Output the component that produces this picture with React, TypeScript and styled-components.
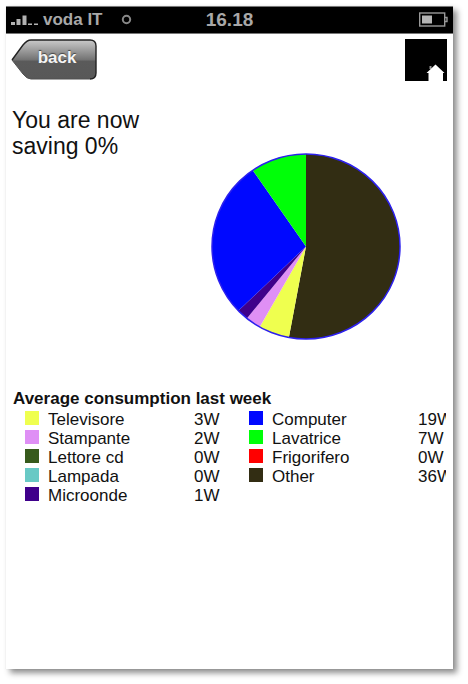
import React from "react";
import styled, { createGlobalStyle } from "styled-components";

const GlobalStyle = createGlobalStyle`
  * { box-sizing: border-box; }
  body {
    margin: 0;
    background: #fff;
    color: #111;
    font-family: "Liberation Sans", Arial, Helvetica, sans-serif;
  }
`;

const Page = styled.div`
  min-height: 100vh;
  padding: 6px 15px 15px 6px;
  display: flex;
`;

const Phone = styled.main`
  flex: 1;
  min-width: 0;
  background: #fff;
  box-shadow: 4px 4px 6px rgba(0, 0, 0, 0.45), 0 0 1px rgba(0, 0, 0, 0.1);
`;

const StatusBar = styled.header`
  display: grid;
  grid-template-columns: 1fr auto 1fr;
  align-items: center;
  height: 28px;
  padding: 0 5px;
  background: #000;
  border-top: 1px solid #777;
  border-bottom: 1px solid #777;
  color: #a8a8a8;
  font-weight: bold;
`;

const Carrier = styled.div`
  display: flex;
  align-items: center;
  font-size: 17px;
  white-space: pre;
`;

const Signal = styled.svg`
  flex: none;
  width: 27px;
  height: 12px;
  margin-right: 5px;
`;

const Activity = styled.svg`
  flex: none;
  width: 12px;
  height: 12px;
  margin-left: 18px;
`;

const Clock = styled.time`
  font-size: 19px;
`;

const Battery = styled.svg`
  width: 29px;
  height: 16px;
  justify-self: end;
`;

const Toolbar = styled.nav`
  display: flex;
  justify-content: space-between;
  align-items: flex-start;
  padding: 5px 6px 0 5px;
`;

const BackButton = styled.button`
  display: grid;
  width: 86px;
  height: 41px;
  padding: 0;
  border: 0;
  background: none;
  color: #f4f4f4;
  font: bold 17px/38px "Liberation Sans", Arial, sans-serif;
  text-shadow: 0 -1px 1px #444;
  cursor: pointer;

  & > * { grid-area: 1 / 1; }
`;

const BackLabel = styled.span`
  padding-left: 6px;
  z-index: 1;
`;

const HomeLink = styled.a`
  display: block;
  width: 42px;
  height: 42px;
`;

const Message = styled.h1`
  width: 150px;
  margin: 26px 0 0 6px;
  font-size: 23px;
  line-height: 26px;
  font-weight: normal;
`;

const ChartRow = styled.div`
  display: flex;
  justify-content: flex-end;
  padding: 0 52px 0 0;
  margin-top: -6px;
`;

const Section = styled.section`
  margin: 48px 7px 0;
`;

const Title = styled.h2`
  margin: 0;
  font-size: 17px;
  line-height: 22px;
`;

const Legend = styled.table`
  width: calc(100% - 12px);
  margin-left: 12px;
  table-layout: fixed;
  border-collapse: collapse;
  font-size: 17px;
  line-height: 19px;
`;

const Col = styled.col<{ $width?: number }>`
  width: ${(p) => (p.$width ? `${p.$width}px` : "auto")};
`;

const Cell = styled.td`
  padding: 0;
  overflow: hidden;
  white-space: nowrap;
  vertical-align: top;
`;

const Name = styled.th`
  padding: 0;
  font-weight: normal;
  text-align: left;
`;

const Swatch = styled.span<{ $color: string }>`
  display: block;
  width: 14px;
  height: 14px;
  margin-top: 1px;
  background: ${(p) => p.$color};
`;

type Item = { name: string; watts: number; color: string };

const televisore: Item = { name: "Televisore", watts: 3, color: "#efff4f" };
const stampante: Item = { name: "Stampante", watts: 2, color: "#df8ff5" };
const lettore: Item = { name: "Lettore cd", watts: 0, color: "#375a1c" };
const lampada: Item = { name: "Lampada", watts: 0, color: "#68c9c5" };
const microonde: Item = { name: "Microonde", watts: 1, color: "#3f008b" };
const computer: Item = { name: "Computer", watts: 19, color: "#0008ff" };
const lavatrice: Item = { name: "Lavatrice", watts: 7, color: "#00ff08" };
const frigorifero: Item = { name: "Frigorifero", watts: 0, color: "#ff0000" };
const other: Item = { name: "Other", watts: 36, color: "#322d13" };

const rows: Item[][] = [
  [televisore, computer],
  [stampante, lavatrice],
  [lettore, frigorifero],
  [lampada, other],
  [microonde],
];

const slices = [
  { item: other, from: 0, to: 190.5 },
  { item: televisore, from: 190.5, to: 209.5 },
  { item: stampante, from: 209.5, to: 219 },
  { item: microonde, from: 219, to: 226 },
  { item: computer, from: 226, to: 325.5 },
  { item: lavatrice, from: 325.5, to: 360 },
];

const point = (deg: number) => {
  const a = (deg * Math.PI) / 180;
  return `${(95 + 94 * Math.sin(a)).toFixed(2)} ${(93.5 - 92.5 * Math.cos(a)).toFixed(2)}`;
};

function Pie() {
  return (
    <svg width="190" height="187" viewBox="0 0 190 187" role="img" aria-label="Consumption by appliance">
      {slices.map(({ item, from, to }) => (
        <path
          key={item.name}
          fill={item.color}
          d={`M95 93.5L${point(from)}A94 92.5 0 ${to - from > 180 ? 1 : 0} 1 ${point(to)}Z`}
        />
      ))}
      <ellipse cx="95" cy="93.5" rx="94" ry="92.5" fill="none" stroke="#2c20ee" strokeWidth="1.5" />
    </svg>
  );
}

function LegendCells({ item }: { item: Item }) {
  return (
    <>
      <Cell><Swatch $color={item.color} /></Cell>
      <Name scope="row">{item.name}</Name>
      <Cell>{item.watts}W</Cell>
    </>
  );
}

export default function App() {
  return (
    <>
      <GlobalStyle />
      <Page>
        <Phone>
          <StatusBar>
            <Carrier>
              <Signal viewBox="0 0 27 12" fill="#b2b2b2" aria-hidden="true">
                <path d="M0 8h4v3H0zM5.500 5h4v6h-4zM11.500 1.500h4V11h-4zM17 9.500h4V11h-4zM23 9.500h4V11h-4z" />
              </Signal>
              voda IT
              <Activity viewBox="0 0 12 12" aria-hidden="true">
                <circle cx="5.500" cy="5.500" r="3.700" fill="none" stroke="#888" strokeWidth="2" />
              </Activity>
            </Carrier>
            <Clock>16.18</Clock>
            <Battery viewBox="0 0 29 16" aria-hidden="true">
              <rect x="0.700" y="1" width="25" height="13" fill="none" stroke="#999" strokeWidth="1.400" />
              <path d="M26 5.500h2v4h-2" fill="none" stroke="#999" strokeWidth="1.400" />
              <rect x="3" y="3.500" width="10" height="8" fill="#b5b5b5" />
            </Battery>
          </StatusBar>
          <Toolbar>
            <BackButton type="button">
              <svg width="86" height="41" viewBox="0 0 86 41" aria-hidden="true">
                <defs>
                  <linearGradient id="gloss" x1="0" y1="0" x2="0" y2="1">
                    <stop offset="0" stopColor="#cacaca" />
                    <stop offset="0.5" stopColor="#747474" />
                    <stop offset="0.55" stopColor="#5a5a5a" />
                    <stop offset="1" stopColor="#585858" />
                  </linearGradient>
                </defs>
                <path
                  d="M1 21L12 6Q16 1 20 1H79Q85 1 85 7V34Q85 40 79 40H20Q16 40 12 35Z"
                  fill="url(#gloss)"
                />
                <path
                  d="M1 21L12 6Q16 1 20 1H79Q85 1 85 7V34Q85 40 79 40"
                  fill="none"
                  stroke="#222"
                  strokeWidth="1.400"
                />
                <path d="M1 21L12 35Q16 40 20 40H79" fill="none" stroke="#505050" strokeWidth="1" />
              </svg>
              <BackLabel>back</BackLabel>
            </BackButton>
            <HomeLink href="#home" aria-label="Home">
              <svg width="42" height="42" viewBox="0 0 42 42" aria-hidden="true">
                <rect width="42" height="42" fill="#000" />
                <path d="M24.500 27h2v3h-2z" fill="#999" />
                <path d="M23.500 42V34H21.500L30.500 25.500L39.500 34H38V42Z" fill="#fff" />
              </svg>
            </HomeLink>
          </Toolbar>
          <Message>You are now saving 0%</Message>
          <ChartRow><Pie /></ChartRow>
          <Section>
            <Title id="legend-title">Average consumption last week</Title>
            <Legend aria-labelledby="legend-title">
              <colgroup>
                <Col $width={23} />
                <Col />
                <Col $width={55} />
                <Col $width={23} />
                <Col />
                <Col $width={28} />
              </colgroup>
              <tbody>
                {rows.map((row) => (
                  <tr key={row[0].name}>
                    {row.map((item) => (
                      <LegendCells key={item.name} item={item} />
                    ))}
                  </tr>
                ))}
              </tbody>
            </Legend>
          </Section>
        </Phone>
      </Page>
    </>
  );
}
